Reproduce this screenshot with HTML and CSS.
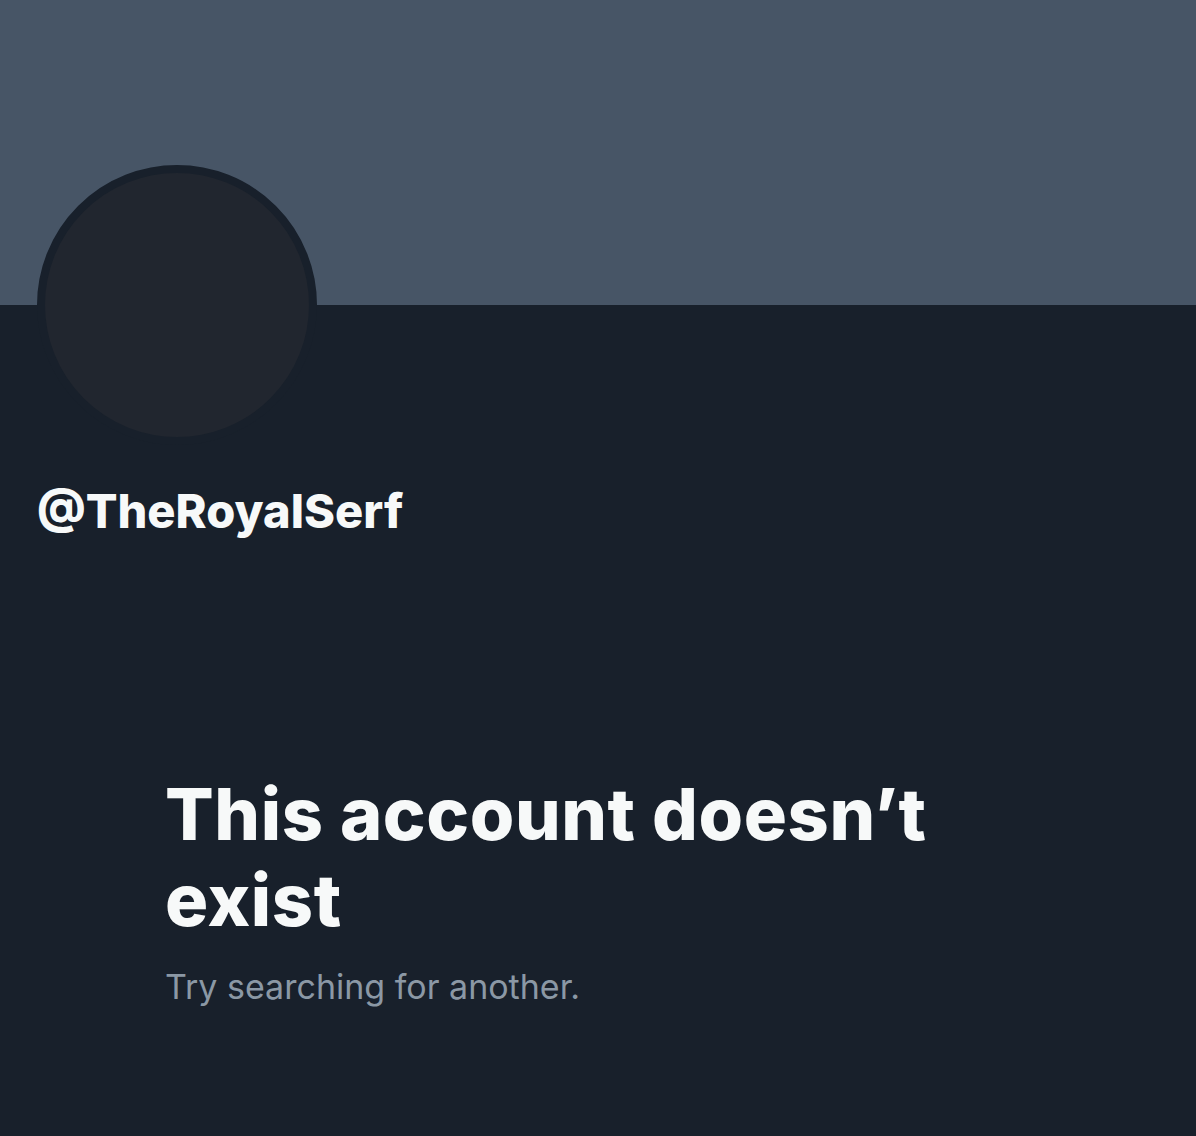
FILE: index.html
```html
<!DOCTYPE html>
<html lang="en">

<head>
  <meta charset="UTF-8">
  <meta name="viewport" content="width=device-width, initial-scale=1.0">
  <title>Profile</title>
  <link rel="stylesheet" href="styles.css">
</head>

<body>
  <div class="banner"></div>
  <div class="profile">
    <div class="avatar"></div>
    <div class="handle">@TheRoyalSerf</div>
  </div>
  <div class="empty">
    <h1>This account doesn’t exist</h1>
    <p>Try searching for another.</p>
  </div>
</body>

</html>
```

FILE: styles.css
```css
* {
  padding: 0;
  margin: 0;
  box-sizing: border-box;
}

body {
  background: #18202b;
  color: #f7f9f9;
  font-family: Inter, "Noto Sans", sans-serif;
  height: 1136px;
  overflow: hidden;
}

.banner {
  height: 305px;
  background: #475566;
}

.profile {
  padding: 0 37px;
}

.avatar {
  width: 280px;
  height: 280px;
  margin-top: -140px;
  border-radius: 50%;
  border: 8px solid #18202b;
  background: #21262f;
}

.handle {
  margin-top: 38px;
  font-size: 47px;
  font-weight: 800;
  line-height: 56px;
  letter-spacing: 0;
}

.empty {
  padding: 232px 165px 0;
}

.empty h1 {
  font-size: 72px;
  font-weight: 800;
  line-height: 86px;
  letter-spacing: 0.6px;
}

.empty p {
  margin-top: 22px;
  font-size: 34px;
  line-height: 44px;
  color: #8b98a5;
}
```
